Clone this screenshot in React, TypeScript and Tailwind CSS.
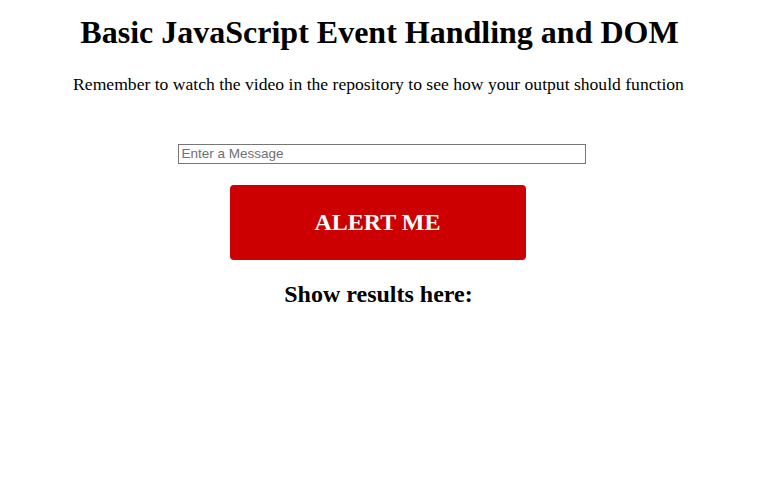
export default function App() {
  return (
    <div className="min-h-[492px] bg-white text-black font-['Liberation_Serif',serif] flex flex-col items-center">
      <h1 className="mt-[14px] text-[32px] font-bold leading-[37px]">
        Basic JavaScript Event Handling and DOM
      </h1>
      <p className="mt-[23px] ml-[-2px] text-[17.6px] leading-[20px]">
        Remember to watch the video in the repository to see how your output should function
      </p>
      <input
        type="text"
        placeholder="Enter a Message"
        className="mt-[50px] ml-[4px] w-[408px] h-[20px] border border-[#767676] pl-[3px] pr-[2px] text-[13.5px] font-['Liberation_Sans',sans-serif] placeholder:text-[#707070] outline-none"
      />
      <button className="mt-[21px] mr-[4px] w-[296px] h-[75px] rounded-[4px] bg-[#cc0000] text-white text-[24px] font-bold pb-[1px]">
        ALERT ME
      </button>
      <h2 className="mt-[20px] mr-[2px] text-[24px] font-bold leading-[28px]">Show results here:</h2>
    </div>
  )
}
